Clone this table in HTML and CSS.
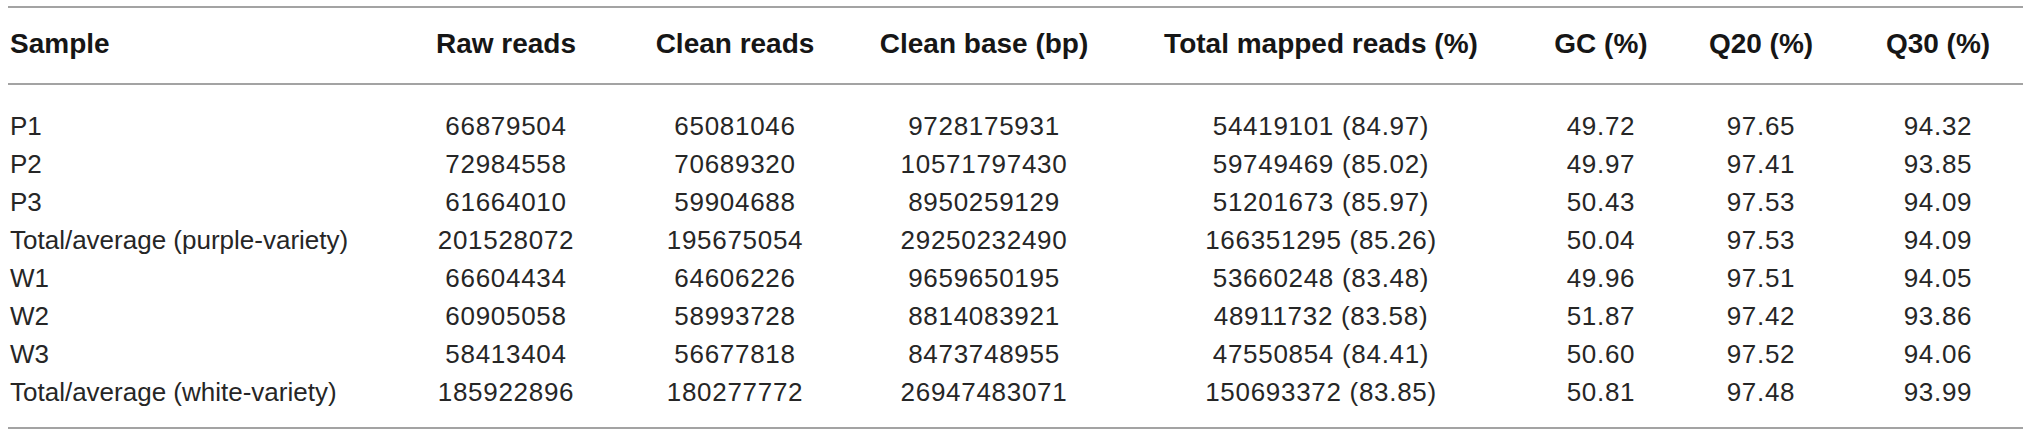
FILE: index.html
```html
<!DOCTYPE html>
<html>
<head>
<meta charset="utf-8">
<link rel="stylesheet" href="styles.css">
</head>
<body>
<table class="stats">
  <colgroup>
    <col class="c-sample">
    <col class="c-raw">
    <col class="c-clean">
    <col class="c-base">
    <col class="c-mapped">
    <col class="c-gc">
    <col class="c-q20">
    <col class="c-q30">
  </colgroup>
  <thead>
    <tr>
      <th class="lbl">Sample</th>
      <th>Raw reads</th>
      <th>Clean reads</th>
      <th>Clean base (bp)</th>
      <th>Total mapped reads (%)</th>
      <th>GC (%)</th>
      <th>Q20 (%)</th>
      <th>Q30 (%)</th>
    </tr>
  </thead>
  <tbody>
    <tr class="first">
      <td class="lbl">P1</td><td>66879504</td><td>65081046</td><td>9728175931</td><td>54419101 (84.97)</td><td>49.72</td><td>97.65</td><td>94.32</td>
    </tr>
    <tr>
      <td class="lbl">P2</td><td>72984558</td><td>70689320</td><td>10571797430</td><td>59749469 (85.02)</td><td>49.97</td><td>97.41</td><td>93.85</td>
    </tr>
    <tr>
      <td class="lbl">P3</td><td>61664010</td><td>59904688</td><td>8950259129</td><td>51201673 (85.97)</td><td>50.43</td><td>97.53</td><td>94.09</td>
    </tr>
    <tr>
      <td class="lbl">Total/average (purple-variety)</td><td>201528072</td><td>195675054</td><td>29250232490</td><td>166351295 (85.26)</td><td>50.04</td><td>97.53</td><td>94.09</td>
    </tr>
    <tr>
      <td class="lbl">W1</td><td>66604434</td><td>64606226</td><td>9659650195</td><td>53660248 (83.48)</td><td>49.96</td><td>97.51</td><td>94.05</td>
    </tr>
    <tr>
      <td class="lbl">W2</td><td>60905058</td><td>58993728</td><td>8814083921</td><td>48911732 (83.58)</td><td>51.87</td><td>97.42</td><td>93.86</td>
    </tr>
    <tr>
      <td class="lbl">W3</td><td>58413404</td><td>56677818</td><td>8473748955</td><td>47550854 (84.41)</td><td>50.60</td><td>97.52</td><td>94.06</td>
    </tr>
    <tr class="last">
      <td class="lbl">Total/average (white-variety)</td><td>185922896</td><td>180277772</td><td>26947483071</td><td>150693372 (83.85)</td><td>50.81</td><td>97.48</td><td>93.99</td>
    </tr>
  </tbody>
</table>
</body>
</html>
```
FILE: styles.css
```css
html, body {
  background: #ffffff;
}
body {
  margin: 6px 8px 0 8px;
  font-family: "Liberation Sans", Arial, Helvetica, sans-serif;
  color: #262626;
}
.stats {
  width: 2015px;
  table-layout: fixed;
  border-collapse: collapse;
  border-top: 2px solid #a3a3a3;
  border-bottom: 2px solid #a3a3a3;
}
.c-sample { width: 393px; }
.c-raw { width: 210px; }
.c-clean { width: 248px; }
.c-base { width: 250px; }
.c-mapped { width: 424px; }
.c-gc { width: 136px; }
.c-q20 { width: 184px; }
.c-q30 { width: 170px; }

.stats th {
  height: 72px;
  padding: 0 0 3px 0;
  font-size: 28px;
  font-weight: bold;
  color: #161616;
  text-align: center;
  vertical-align: middle;
  border-bottom: 2px solid #a3a3a3;
  white-space: nowrap;
}
.stats td {
  height: 38px;
  padding: 0;
  font-size: 26px;
  line-height: 38px;
  text-align: center;
  vertical-align: middle;
  letter-spacing: 0.7px;
  white-space: nowrap;
}
.stats .lbl {
  text-align: left;
  padding-left: 2px;
  letter-spacing: 0;
}
.stats tr.first td {
  padding-top: 22px;
}
.stats tr.last td {
  padding-bottom: 16px;
}
```
